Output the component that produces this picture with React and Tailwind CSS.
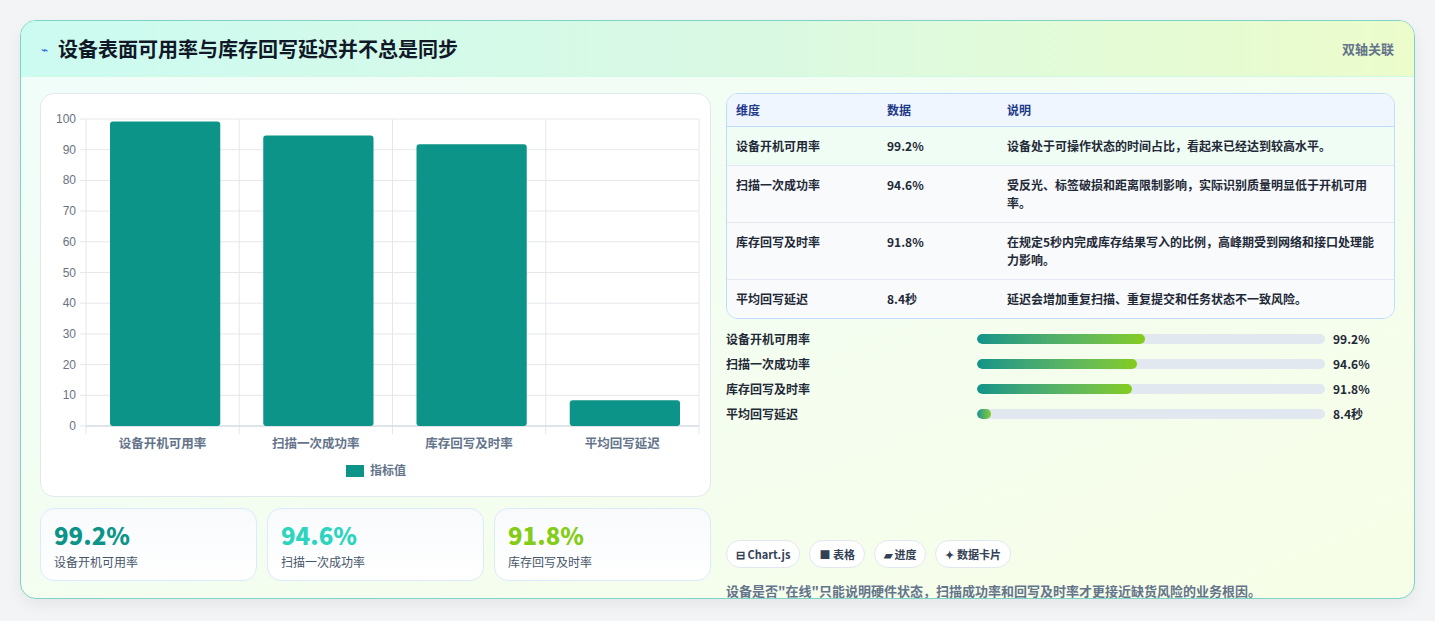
import React from "react";

const F = { fontFamily: '"Noto Sans CJK SC", "Noto Sans", sans-serif' };

const rows = [
  ["设备开机可用率", "99.2%", "设备处于可操作状态的时间占比，看起来已经达到较高水平。", "bg-[#f0fdf4]"],
  ["扫描一次成功率", "94.6%", "受反光、标签破损和距离限制影响，实际识别质量明显低于开机可用率。", "bg-[#f8fafc]"],
  ["库存回写及时率", "91.8%", "在规定5秒内完成库存结果写入的比例，高峰期受到网络和接口处理能力影响。", "bg-[#f8fafc]"],
  ["平均回写延迟", "8.4秒", "延迟会增加重复扫描、重复提交和任务状态不一致风险。", "bg-[#f8fafc]"],
];
const bars = [
  ["设备开机可用率", "99.2%", 48.3],
  ["扫描一次成功率", "94.6%", 46],
  ["库存回写及时率", "91.8%", 44.5],
  ["平均回写延迟", "8.4秒", 4],
];

function Chart() {
  const L = 45, R = 658, T = 22, B = 329;
  const yv = (v) => B - ((B - T) * v) / 100;
  const vals = [99.2, 94.6, 91.8, 8.4];
  const labels = ["设备开机可用率", "扫描一次成功率", "库存回写及时率", "平均回写延迟"];
  const cw = (R - L) / 4;
  return (
    <svg width="670" height="400" className="block">
      {[0, 10, 20, 30, 40, 50, 60, 70, 80, 90, 100].map((v) => (
        <g key={v}>
          <line x1={L - 6} x2={R} y1={yv(v)} y2={yv(v)} stroke="#e5e7eb" />
          <text x={L - 10} y={yv(v) + 4} textAnchor="end" fontSize="12" fill="#6b7280" fontFamily="Liberation Sans, sans-serif">{v}</text>
        </g>
      ))}
      {[0, 1, 2, 3, 4].map((i) => (
        <line key={i} x1={L + cw * i} x2={L + cw * i} y1={T} y2={B + 8} stroke="#e5e7eb" />
      ))}
      <line x1={L} x2={R} y1={B} y2={B} stroke="#cbd5e1" />
      {vals.map((v, i) => (
        <rect key={i} x={L + cw * i + 24} y={yv(v)} width={cw - 43} height={B - yv(v)} rx="3" fill="#0d9488" />
      ))}
      {labels.map((l, i) => (
        <text key={l} x={L + cw * i + cw / 2} y={351} textAnchor="middle" fontSize="12.5" fill="#64748b" fontWeight="600" style={F}>{l}</text>
      ))}
      <rect x={305} y={368} width={18} height={12} fill="#0d9488" />
      <text x={329} y={378} fontSize="12" fill="#64748b" fontWeight="600" style={F}>指标值</text>
    </svg>
  );
}

export default function App() {
  return (
    <div className="w-[1435px] h-[621px] bg-[#f3f4f6] pt-[20px] px-[20px]" style={F}>
      <div className="h-[579px] rounded-[16px] border border-[#7dd3c5] overflow-hidden bg-gradient-to-br from-[#f0fdfa] to-[#f7fee7] shadow-[0_6px_16px_rgba(0,0,0,0.06)]">
        <div className="h-[56px] flex items-center justify-between px-[20px] bg-gradient-to-r from-[#ccfbf1] via-[#d9f9e4] to-[#ecfccb] border-b border-[#d1fae5]">
          <div className="flex items-center gap-[10px]">
            <span className="text-[#2563eb] text-[12px]">⌁</span>
            <span className="text-[20px] font-bold text-[#111827]">设备表面可用率与库存回写延迟并不总是同步</span>
          </div>
          <span className="text-[13px] font-semibold text-[#64748b]">双轴关联</span>
        </div>
        <div className="flex gap-[15px] px-[19px] pt-[16px]">
          <div className="w-[671px] flex flex-col gap-[11px]">
            <div className="h-[404px] rounded-[14px] border border-[#e2e8f0] bg-white pt-[3px]">
              <Chart />
            </div>
            <div className="grid grid-cols-3 gap-[10px]">
              {[["99.2%", "text-[#0d9488]", "设备开机可用率"], ["94.6%", "text-[#2dd4bf]", "扫描一次成功率"], ["91.8%", "text-[#84cc16]", "库存回写及时率"]].map(([v, c, l]) => (
                <div key={l} className="h-[73px] rounded-[14px] border border-[#dbeafe] bg-gradient-to-b from-[#f8fafc] to-white px-[13px] pt-[10px]">
                  <div className={`text-[24px] font-extrabold leading-[32px] ${c}`}>{v}</div>
                  <div className="text-[12px] text-[#475569] mt-[2px]">{l}</div>
                </div>
              ))}
            </div>
          </div>
          <div className="flex-1 flex flex-col">
            <div className="rounded-[12px] border border-[#bfdbfe] overflow-hidden text-[12px] text-[#1f2937] font-semibold">
              <div className="h-[33px] flex items-center bg-[#eff6ff] text-[#1e3a8a] border-b border-[#bfdbfe]">
                <div className="w-[160px] pl-[9px]">维度</div>
                <div className="w-[120px]">数据</div>
                <div className="flex-1">说明</div>
              </div>
              {rows.map(([a, b, c, bg], i) => (
                <div key={a} className={`flex py-[10px] leading-[18px] ${bg} ${i < 3 ? "border-b border-[#e2e8f0]" : ""}`}>
                  <div className="w-[160px] pl-[9px]">{a}</div>
                  <div className="w-[120px]">{b}</div>
                  <div className="flex-1 pr-[10px]">{c}</div>
                </div>
              ))}
            </div>
            <div className="flex flex-col gap-[9px] mt-[12px] text-[12px] font-semibold text-[#1f2937]">
              {bars.map(([l, v, w]) => (
                <div key={l} className="flex items-center h-[16px]">
                  <div className="w-[251px]">{l}</div>
                  <div className="w-[348px] h-[10px] rounded-full bg-[#e2e8f0] overflow-hidden">
                    <div className="h-full rounded-full bg-gradient-to-r from-[#0d9488] to-[#84cc16]" style={{ width: `${(w / 48.3) * 48.3}%`, minWidth: 12 }} />
                  </div>
                  <div className="ml-[8px]">{v}</div>
                </div>
              ))}
            </div>
            <div className="flex gap-[9px] mt-[118px] text-[11px] font-semibold text-[#334155]">
              {["⊟ Chart.js", "■ 表格", "▰ 进度", "✦ 数据卡片"].map((t) => (
                <span key={t} className="h-[28px] px-[9px] flex items-center rounded-full bg-white border border-[#e2e8f0]">{t}</span>
              ))}
            </div>
            <div className="mt-[13px] text-[13px] font-semibold text-[#64748b]">设备是否"在线"只能说明硬件状态，扫描成功率和回写及时率才更接近缺货风险的业务根因。</div>
          </div>
        </div>
      </div>
    </div>
  );
}
